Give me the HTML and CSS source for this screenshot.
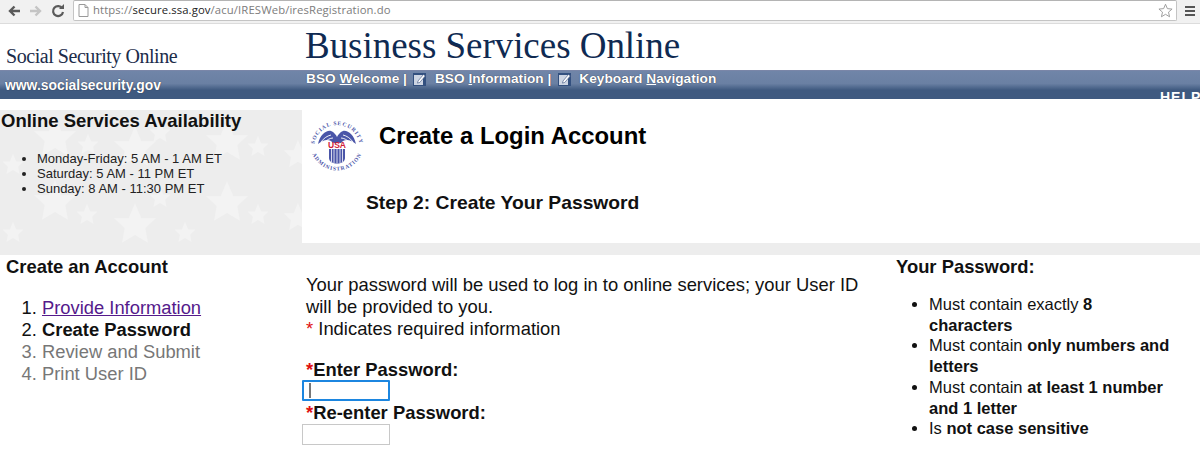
FILE: index.html
```html
<!DOCTYPE html>
<html lang="en">
<head>
<meta charset="utf-8">
<title>Business Services Online</title>
<link rel="stylesheet" href="styles.css">
</head>
<body>
<div class="chrome">
  <svg class="nav-ic" width="14" height="14" viewBox="0 0 14 14"><path d="M13 7H4M7.500 2.500 3 7l4.500 4.500" fill="none" stroke="#5a5a5a" stroke-width="2.400"/></svg>
  <svg class="nav-ic" width="14" height="14" viewBox="0 0 14 14"><path d="M1 7h9M6.500 2.500 11 7l-4.500 4.500" fill="none" stroke="#c4c4c4" stroke-width="2.400"/></svg>
  <svg class="nav-ic" width="14" height="14" viewBox="0 0 14 14"><path d="M11.300 4.400A5 5 0 1 0 12 8" fill="none" stroke="#5a5a5a" stroke-width="2.200"/><path d="M8 5h5V0z" fill="#5a5a5a"/></svg>
  <div class="omnibox">
    <svg width="11" height="13" viewBox="0 0 11 13"><path d="M1 .5h6l3 3v9H1zM7 .5v3h3" fill="#fff" stroke="#9a9a9a"/></svg>
    <span class="url"><span class="url-dim">https://</span>secure.ssa.gov<span class="url-dim">/acu/IRESWeb/iresRegistration.do</span></span>
    <svg class="star-ic" width="15" height="15" viewBox="0 0 24 24"><path d="m12 2 3 7 7.500.7-5.700 4.900 1.700 7.400-6.500-3.900-6.500 3.900 1.700-7.400L1.500 9.700 9 9z" fill="none" stroke="#9a9a9a" stroke-width="1.500"/></svg>
  </div>
  <div class="menu-ic"><i></i><i></i><i></i></div>
</div>

<header class="masthead">
  <div class="ssol">Social Security Online</div>
  <div class="bso-title">Business Services Online</div>
</header>
<nav class="band">
  <a class="site">www.socialsecurity.gov</a>
  <div class="links">
    <span>BSO <u>W</u>elcome |</span>
    <svg class="edit" width="14" height="13" viewBox="0 0 14 13"><rect width="13" height="13" fill="#33507f"/><path d="M1 2h9v10H1z" fill="#cdd5e3"/><path d="m5 8 5.500-6.500 1.800 1.400-5.500 6.500-2.300.7z" fill="#fff" stroke="#39517f" stroke-width=".6"/></svg>
    <span>BSO <u>I</u>nformation |</span>
    <svg class="edit" width="14" height="13" viewBox="0 0 14 13"><rect width="13" height="13" fill="#33507f"/><path d="M1 2h9v10H1z" fill="#cdd5e3"/><path d="m5 8 5.500-6.500 1.800 1.400-5.500 6.500-2.300.7z" fill="#fff" stroke="#39517f" stroke-width=".6"/></svg>
    <span>Keyboard <u>N</u>avigation</span>
  </div>
  <span class="help">HELP</span>
</nav>

<section class="top">
  <aside class="avail">
    <svg class="stars" width="302" height="133" viewBox="0 0 302 133">
      <defs><path id="s" d="M0-10 2.900-3.100 9.500-3.100 4.700 1.500 5.900 8.100 0 4.500-5.900 8.100-4.700 1.500-9.500-3.100-2.900-3.100z"/></defs>
      <g fill="#f3f3f3">
        <use href="#s" transform="translate(55 28) scale(2.200)"/>
        <use href="#s" transform="translate(88 35) scale(1.100)"/>
        <use href="#s" transform="translate(135 38) scale(2.200)"/>
        <use href="#s" transform="translate(160 23) scale(1.100)"/>
        <use href="#s" transform="translate(227 32) scale(2.200)"/>
        <use href="#s" transform="translate(258 37) scale(1.100)"/>
        <use href="#s" transform="translate(13 55) scale(1.100)"/>
        <use href="#s" transform="translate(55 92) scale(2.200)"/>
        <use href="#s" transform="translate(87 105) scale(1.100)"/>
        <use href="#s" transform="translate(135 115) scale(2.200)"/>
        <use href="#s" transform="translate(160 88) scale(1.100)"/>
        <use href="#s" transform="translate(185 123) scale(1.100)"/>
        <use href="#s" transform="translate(227 93) scale(2.200)"/>
        <use href="#s" transform="translate(258 105) scale(1.100)"/>
        <use href="#s" transform="translate(13 123) scale(1.100)"/>
        <use href="#s" transform="translate(298 45) scale(1.500)"/>
        <use href="#s" transform="translate(298 108) scale(1.500)"/>
      </g>
    </svg>
    <h2>Online Services Availability</h2>
    <ul>
      <li>Monday-Friday: 5 AM - 1 AM ET</li>
      <li>Saturday: 5 AM - 11 PM ET</li>
      <li>Sunday: 8 AM - 11:30 PM ET</li>
    </ul>
  </aside>
  <div class="title-panel">
    <div class="title-row">
      <svg class="seal" width="56" height="56" viewBox="0 0 56 56">
        <defs>
          <path id="arc-top" d="M5 30A23 23 0 0 1 51 30"/>
          <path id="arc-bot" d="M1.500 26A26.500 26.500 0 0 0 54.500 26"/>
        </defs>
        <text class="seal-text"><textPath href="#arc-top" startOffset="50%" text-anchor="middle">SOCIAL SECURITY</textPath></text>
        <text class="seal-text"><textPath href="#arc-bot" startOffset="50%" text-anchor="middle">ADMINISTRATION</textPath></text>
        <path d="M9 26C11 17 17 12 22 13c3 1 5 4 6 6 1-2 3-5 6-6 5-1 11 4 13 13-5-4-9-5-13-3l-2 2H24l-2-2c-4-2-8-1-13 3z" fill="#4a55a8"/>
        <path d="M12 24c3-4 6-6 10-7M16 24c2-2 5-4 8-4M44 24c-3-4-6-6-10-7M40 24c-2-2-5-4-8-4" fill="none" stroke="#fff" stroke-width=".9"/>
        <text class="seal-usa" x="28" y="30" text-anchor="middle">USA</text>
        <path d="M20 31h16v9c0 4-4 5-8 6-4-1-8-2-8-6z" fill="#4a55a8"/>
        <path d="M22.500 31v13M25 31v14M28 31v15M31 31v14M33.500 31v13" stroke="#fff" stroke-width=".8"/>
      </svg>
      <h1>Create a Login Account</h1>
    </div>
    <h3>Step 2: Create Your Password</h3>
  </div>
</section>
<div class="divider"></div>

<main class="columns">
  <section class="steps">
    <h4>Create an Account</h4>
    <ol>
      <li><a href="#">Provide Information</a></li>
      <li class="current">Create Password</li>
      <li class="todo">Review and Submit</li>
      <li class="todo">Print User ID</li>
    </ol>
  </section>
  <section class="form">
    <p>Your password will be used to log in to online services; your User ID will be provided to you.<br><span class="req">*</span> Indicates required information</p>
    <label class="lbl"><span class="req">*</span>Enter Password:</label>
    <div class="field focus"><i class="caret"></i></div>
    <label class="lbl second"><span class="req">*</span>Re-enter Password:</label>
    <div class="field"></div>
  </section>
  <section class="rules">
    <h4>Your Password:</h4>
    <ul>
      <li>Must contain exactly <b>8 characters</b></li>
      <li>Must contain <b>only numbers and letters</b></li>
      <li>Must contain <b>at least 1 number and 1 letter</b></li>
      <li>Is <b>not case sensitive</b></li>
    </ul>
  </section>
</main>
</body>
</html>
```
FILE: styles.css
```css
* { box-sizing: border-box; }
html, body { margin: 0; padding: 0; }
body {
  width: 1200px;
  height: 466px;
  overflow: hidden;
  background: #fff;
  color: #111;
  font-family: "Liberation Sans", Arial, sans-serif;
}

/* browser toolbar */
.chrome {
  height: 24px;
  display: flex;
  align-items: center;
  gap: 8px;
  padding-left: 7px;
  background: #f1f1f1;
  border-bottom: 1px solid #dcdcdc;
}
.nav-ic { flex: none; margin-top: -2px; }
.omnibox {
  flex: 1;
  height: 21px;
  margin: -3px 0 0 0;
  display: flex;
  align-items: center;
  padding: 0 3px 0 4px;
  gap: 4px;
  background: #fff;
  border: 1px solid #c4c4c4;
  border-top-color: #b4b4b4;
  border-radius: 2px;
}
.url { font: 11.300px/1 "Open Sans", "Liberation Sans", sans-serif; color: #222; letter-spacing: .01em; }
.url-dim { color: #7c7c7c; }
.star-ic { margin-left: auto; }
.menu-ic { width: 10px; margin: -2px 5px 0 0; display: flex; flex-direction: column; gap: 2px; }
.menu-ic i { display: block; height: 2px; background: #555; }

/* masthead */
.masthead { height: 46px; display: flex; align-items: flex-end; }
.ssol {
  width: 301px;
  padding: 0 0 2px 6px;
  font: 20px/24px "Liberation Serif", serif;
  letter-spacing: -.45px;
  color: #1c2c4a;
}
.bso-title {
  padding: 0 0 2px 4px;
  font: 37px/44px "Liberation Serif", serif;
  letter-spacing: -.04px;
  color: #0f2a52;
}

/* blue band */
.band {
  position: relative;
  height: 29px;
  display: flex;
  overflow: hidden;
  background: linear-gradient(#7085a8 0, #6a80a3 45%, #3f5a80 68%, #3f5a80 100%);
  border-top: 1px solid #7a86a8;
  color: #fff;
  font-weight: bold;
}
.site { width: 301px; padding: 5px 0 0 5px; font-size: 13.900px; line-height: 18px; text-shadow: 0 0 1px #223; }
.links {
  display: flex;
  align-items: flex-start;
  gap: 6.500px;
  padding: 0 0 0 5px;
  margin-top: -1px;
  font-size: 13.700px;
  line-height: 17px;
  text-shadow: 0 0 1px #223;
}
.edit { margin-top: 3px; margin-right: 1px; flex: none; }
.help {
  position: absolute;
  left: 1160px;
  top: 18px;
  font-size: 14px;
  line-height: 16px;
  letter-spacing: 1px;
  white-space: nowrap;
}

/* top row */
.top { display: flex; height: 133px; margin-top: 11px; }
.avail { position: relative; width: 302px; padding: 0 0 0 1px; background: #ededed; overflow: hidden; }
.stars { position: absolute; left: 0; top: 0; }
.avail h2 { position: relative; margin: 0; font-size: 18.500px; line-height: 22px; color: #111; }
.avail ul { position: relative; margin: 19px 0 0; padding: 0 0 0 36px; font-size: 13px; line-height: 15px; color: #222; }
.title-panel { flex: 1; padding: 0 0 0 7px; background: #fff; }
.title-row { display: flex; align-items: flex-start; gap: 14px; }
.seal { flex: none; margin: 8px 0 0 0; }
.seal-text { font: bold 5.500px "Liberation Serif", serif; letter-spacing: .9px; fill: #4a55a8; }
.seal-usa { font: bold 8.500px "Liberation Sans", sans-serif; fill: #d02037; }
.title-panel h1 { margin: 11px 0 0; font-size: 23.900px; line-height: 30px; color: #000; }
.title-panel h3 { margin: 17px 0 0 57px; font-size: 19.270px; line-height: 24px; color: #111; }

.divider { height: 12px; background: #ededed; }

/* lower columns */
.columns { display: flex; }
.steps { width: 301px; padding: 1px 0 0 6px; }
.steps h4, .rules h4 { margin: 0; font-size: 18.400px; line-height: 22px; color: #111; }
.steps ol { margin: 19px 0 0; padding: 0 0 0 36px; font-size: 18.350px; line-height: 22px; }
.steps a { color: #551a8b; }
.current { font-weight: bold; }
.current::marker { font-weight: normal; }
.todo { color: #777; }
.form { width: 589px; padding: 19px 0 0 1px; }
.form p { margin: 0 26px 0 4px; font-size: 18.400px; line-height: 22px; color: #111; }
.req { color: #e01010; }
.lbl { display: block; margin: 19px 0 0 4px; font-size: 18.400px; font-weight: bold; line-height: 21px; }
.lbl.second { margin-top: 1px; line-height: 22px; }
.field { width: 88px; height: 21px; border: 1px solid #c8c8c8; background: #fff; }
.field.focus { border: 2px solid #1c86e0; border-radius: 1px; padding: 1px 0 0 5px; }
.caret { display: block; width: 2px; height: 15px; background: #777; }
.rules { flex: 1; padding: 1px 28px 0 6px; }
.rules ul { margin: 16px 0 0; padding: 0 0 0 33px; font-size: 16.500px; line-height: 20.700px; color: #111; }
```
